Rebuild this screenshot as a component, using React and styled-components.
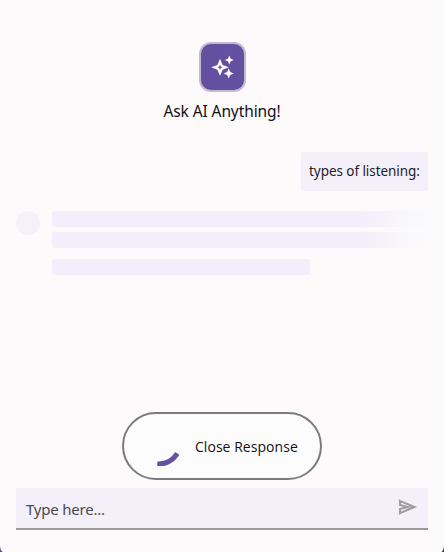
import React from "react";
import styled, { createGlobalStyle } from "styled-components";

const GlobalStyle = createGlobalStyle`
  * { box-sizing: border-box; }
  body {
    margin: 0;
    background: linear-gradient(90deg, #4f4580 50%, #35353a 50%);
    font-family: "Noto Sans", "Open Sans", sans-serif;
  }
`;

const Panel = styled.main`
  width: 444px;
  height: 552px;
  padding: 42px 16px 22px;
  display: flex;
  flex-direction: column;
  background: #fcfafb;
  border-radius: 0 0 3px 3px / 0 0 7px 7px;
  overflow: hidden;
`;

const Header = styled.header`
  height: 110px;
  display: flex;
  flex-direction: column;
  align-items: center;
`;

const Logo = styled.div`
  width: 47px;
  height: 50px;
  border: 2px solid #c2bacd;
  border-radius: 12px;
  background: #644fa1;
  svg { display: block; }
`;

const Title = styled.h1`
  margin: 7px 0 0;
  font-size: 15.5px;
  font-weight: 400;
  line-height: 24px;
  letter-spacing: ${(p) => p.$tracking};
  color: #121114;
  white-space: nowrap;
`;

const Bubble = styled.div`
  align-self: flex-end;
  width: 127px;
  height: 39px;
  padding-left: 8px;
  border-radius: 3px;
  background: #f3f0fa;
  color: #232126;
  font-size: 13.5px;
  line-height: 38px;
  letter-spacing: ${(p) => p.$tracking};
  white-space: nowrap;
`;

const Loading = styled.section`
  display: flex;
  gap: 12px;
  margin-top: 20px;
  height: 64px;
`;

const Avatar = styled.div`
  width: 24px;
  height: 24px;
  border-radius: 50%;
  background: #f4f1f9;
`;

const Lines = styled.div`
  flex: 1;
`;

const Line = styled.div`
  width: ${(p) => p.$width};
  height: 16px;
  margin-bottom: ${(p) => p.$gap || "0"};
  border-radius: 3px;
  background: ${(p) =>
    p.$fade
      ? "linear-gradient(90deg, #f2effa 0 83%, #f6f4fa 89%, #f9f9fb 96%, #fafafb)"
      : "#f2effa"};
`;

const CloseButton = styled.button`
  align-self: center;
  width: 200px;
  height: 68px;
  margin: auto 0 8px;
  padding: 0 0 0 25px;
  display: flex;
  align-items: center;
  border: 2px solid #7c7a7d;
  border-radius: 34px;
  background: #fdfcfc;
  color: #121114;
  font-family: "Open Sans", sans-serif;
  font-size: 14px;
`;

const Spinner = styled.svg`
  width: 40px;
  height: 40px;
  margin-right: 6px;
`;

const ButtonText = styled.span`
  letter-spacing: ${(p) => p.$tracking};
  white-space: nowrap;
`;

const Composer = styled.form`
  height: 42px;
  padding: 0 10px;
  display: flex;
  justify-content: space-between;
  background: #f3f0fa;
  border-bottom: 2px solid #9b9a9c;
`;

const Placeholder = styled.label`
  color: #4c494f;
  font-size: 15px;
  line-height: 43px;
  letter-spacing: ${(p) => p.$tracking};
`;

const SendIcon = styled.svg`
  margin-top: 10px;
  width: 20px;
  height: 18px;
`;

export default function App() {
  return (
    <>
      <GlobalStyle />
      <Panel>
        <Header>
          <Logo>
            <svg width="43" height="46" viewBox="0 0 43 46" fill="#fff">
              <path
                fillRule="evenodd"
                d="M19 14.8 L21.6 21 L27.8 23.2 L21.6 25.7 L19 31.8 L16.4 25.7 L10.2 23.2 L16.4 21 Z M19 20.5 L18.2 22.5 L16.4 23.3 L18.2 24.1 L19 26 L19.8 24.1 L21.6 23.3 L19.8 22.5 Z"
              />
              <path d="M28.3 11.4 L29.7 14.7 L32.9 16 L29.7 17.3 L28.3 20.5 L26.9 17.3 L23.7 16 L26.9 14.7 Z" />
              <path d="M27.7 24.3 L29.2 27.9 L32.8 29.4 L29.2 30.9 L27.7 34.4 L26.2 30.9 L22.6 29.4 L26.2 27.9 Z" />
            </svg>
          </Logo>
          <Title $tracking="-0.1px">Ask AI Anything!</Title>
        </Header>
        <Bubble $tracking="-0.06px">types of listening:</Bubble>
        <Loading>
          <Avatar />
          <Lines>
            <Line $width="100%" $gap="5px" $fade />
            <Line $width="100%" $gap="11px" $fade />
            <Line $width="258px" />
          </Lines>
        </Loading>
        <CloseButton type="button">
          <Spinner viewBox="0 0 40 40" fill="none">
            <path d="M8.3 38 A22 22 0 0 0 28.3 27.4" stroke="#6750a4" strokeWidth="5" />
          </Spinner>
          <ButtonText $tracking="0.04px">Close Response</ButtonText>
        </CloseButton>
        <Composer>
          <Placeholder $tracking="-0.22px">Type here...</Placeholder>
          <SendIcon viewBox="0 0 20 18" fill="none" stroke="#a09da2" strokeWidth="2.1">
            <path d="M2 2.9 L16.4 9 L2 15.1 V11.1 L9.7 9 L2 6.9 Z" />
          </SendIcon>
        </Composer>
      </Panel>
    </>
  );
}
